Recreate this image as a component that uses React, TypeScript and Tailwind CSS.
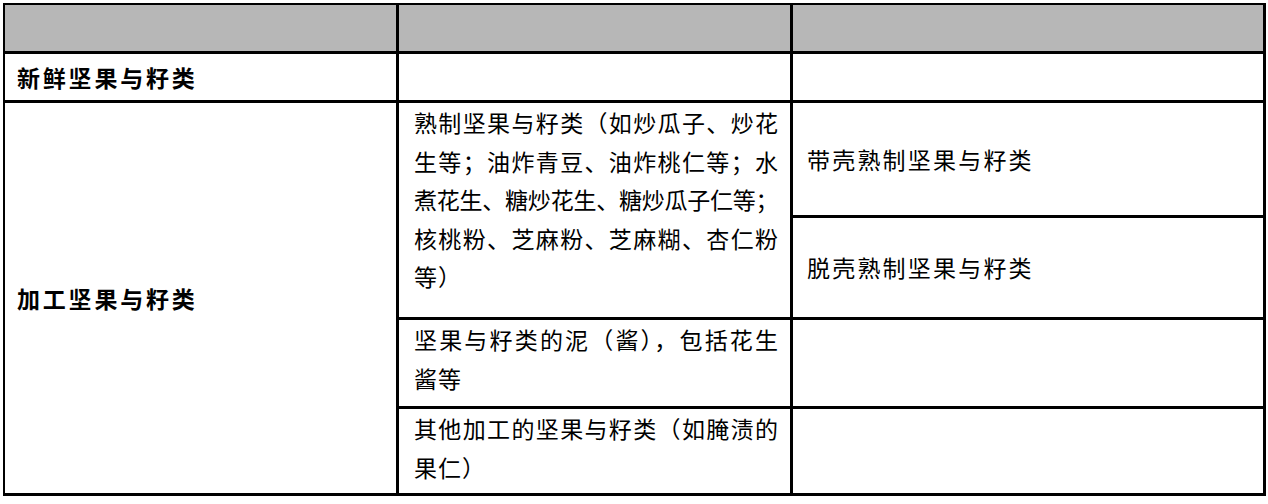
const cjk = "font-['Noto_Sans_CJK_SC','Noto_Sans_CJK_JP',sans-serif]";

const Line = ({ text, full = true, tight = false }: { text: string; full?: boolean; tight?: boolean }) =>
  full ? (
    <div
      className={`w-[364px] whitespace-nowrap text-justify [text-align-last:justify] ${tight ? "tracking-[-0.6px]" : ""}`}
    >
      {text}
    </div>
  ) : (
    <div className="whitespace-nowrap tracking-[1px]">{text}</div>
  );

const Cell = ({ className = "", children }: { className?: string; children?: React.ReactNode }) => (
  <div className={`bg-white ${className}`}>{children}</div>
);

export default function App() {
  return (
    <div className={`w-[1268px] h-[504px] bg-white pt-[3px] pl-[3px] text-black ${cjk}`}>
      <div className="grid w-[1263px] grid-cols-[391px_391px_470px] grid-rows-[46px_46px_112px_99px_86px_84px] gap-[3px] bg-black pt-[2px] pl-[2px] pr-[3px] pb-[3px]">
        {/* header */}
        <div className="bg-[#b7b7b7]" />
        <div className="bg-[#b7b7b7]" />
        <div className="bg-[#b7b7b7]" />

        {/* fresh */}
        <Cell className="flex items-center pl-[12px] text-[23px] font-bold tracking-[2.8px]">新鲜坚果与籽类</Cell>
        <Cell />
        <Cell />

        {/* processed */}
        <Cell className="row-span-4 flex items-center pl-[12px] text-[23px] font-bold tracking-[2.8px]">加工坚果与籽类</Cell>
        <Cell className="row-span-2 pl-[15px] text-[23px] leading-[38.5px]">
          <Line text="熟制坚果与籽类（如炒瓜子、炒花" />
          <Line text="生等；油炸青豆、油炸桃仁等；水" />
          <Line text="煮花生、糖炒花生、糖炒瓜子仁等；" tight />
          <Line text="核桃粉、芝麻粉、芝麻糊、杏仁粉" />
          <Line text="等）" full={false} />
        </Cell>
        <Cell className="flex items-center pl-[14px] text-[23px] tracking-[2.2px]">带壳熟制坚果与籽类</Cell>
        <Cell className="flex items-center pl-[14px] text-[23px] tracking-[2.2px]">脱壳熟制坚果与籽类</Cell>

        <Cell className="pl-[15px] text-[23px] leading-[38.5px]">
          <Line text="坚果与籽类的泥（酱），包括花生" />
          <Line text="酱等" full={false} />
        </Cell>
        <Cell />

        <Cell className="pl-[15px] text-[23px] leading-[38.5px]">
          <Line text="其他加工的坚果与籽类（如腌渍的" />
          <Line text="果仁）" full={false} />
        </Cell>
        <Cell />
      </div>
    </div>
  );
}
